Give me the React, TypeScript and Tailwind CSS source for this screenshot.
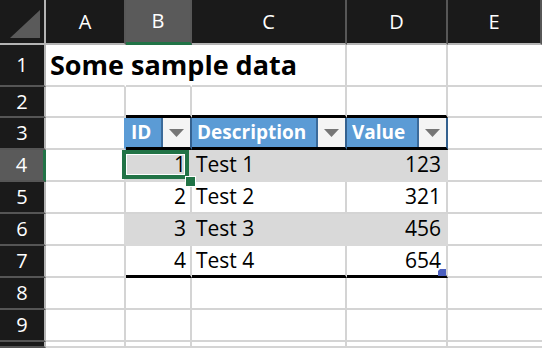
import type { ReactNode } from 'react'

const ROWS = [
  { n: 4, id: 1, desc: 'Test 1', value: 123 },
  { n: 5, id: 2, desc: 'Test 2', value: 321 },
  { n: 6, id: 3, desc: 'Test 3', value: 456 },
  { n: 7, id: 4, desc: 'Test 4', value: 654 },
]

function RowHeader({ n, active }: { n: number | null; active?: boolean }) {
  return (
    <div
      className={`flex w-[46px] shrink-0 items-center justify-center border-b-2 border-b-[#555555] text-[20px] text-white ${
        active ? 'border-r-[3px] border-r-[#217346] bg-[#5a5a5a]' : 'border-r-2 border-r-[#b4b4b4] bg-[#1a1a1a]'
      }`}
    >
      {n}
    </div>
  )
}

function ColHeader({ label, width, active }: { label: string; width: string; active?: boolean }) {
  return (
    <div
      className={`flex shrink-0 items-center justify-center border-r-2 border-r-[#575757] text-[20px] text-white ${width} ${
        active ? 'border-b-[3px] border-b-[#217346] bg-[#5a5a5a]' : 'border-b-2 border-b-[#b4b4b4] bg-[#1a1a1a]'
      }`}
    >
      {label}
    </div>
  )
}

function FilterButton() {
  return (
    <div className="ml-auto flex h-full w-[29px] shrink-0 items-center justify-center border-l-2 border-l-[#3b6a99] bg-[#f4f4f4]">
      <svg width="15" height="8" viewBox="0 0 15 8">
        <polygon points="0,0 15,0 7.5,8" fill="#767676" />
      </svg>
    </div>
  )
}

function HeadCell({ label, width }: { label: string; width: string }) {
  return (
    <div
      className={`flex shrink-0 items-center border-r-2 border-b-[3px] border-r-[#34618f] border-b-black bg-[#5b9bd5] ${width}`}
    >
      <span className="pl-[5px] text-[19px] font-bold text-white">{label}</span>
      <FilterButton />
    </div>
  )
}

function Row({ h, children }: { h: string; children: ReactNode }) {
  return <div className={`flex shrink-0 ${h}`}>{children}</div>
}

export default function App() {
  return (
    <div className="flex h-[348px] w-[542px] flex-col overflow-hidden bg-white font-['Open_Sans',sans-serif] text-black">
      {/* column letters */}
      <Row h="h-[45px]">
        <div className="flex w-[46px] shrink-0 items-end justify-end border-r-2 border-b-2 border-[#b4b4b4] bg-[#1a1a1a] pr-[4px] pb-[5px]">
          <svg width="30" height="28" viewBox="0 0 30 28">
            <polygon points="30,0 30,28 0,28" fill="#5a5a5a" />
          </svg>
        </div>
        <ColHeader label="A" width="w-[80px]" />
        <ColHeader label="B" width="w-[66px]" active />
        <ColHeader label="C" width="w-[155px]" />
        <ColHeader label="D" width="w-[101px]" />
        <ColHeader label="E" width="flex-1" />
      </Row>

      {/* row 1: title spills over B and C */}
      <Row h="h-[42px]">
        <RowHeader n={1} />
        <div className="relative z-10 flex w-[80px] shrink-0 items-center border-r-2 border-b-2 border-r-white border-b-[#d4d4d4] pl-[4px] text-[27px] font-bold whitespace-nowrap">
          Some sample data
        </div>
        <div className="w-[66px] shrink-0 border-r-2 border-b-2 border-r-white border-b-[#d4d4d4]" />
        <div className="w-[155px] shrink-0 border-r-2 border-b-2 border-[#d4d4d4]" />
        <div className="w-[101px] shrink-0 border-r-2 border-b-2 border-[#d4d4d4]" />
        <div className="flex-1 border-b-2 border-[#d4d4d4]" />
      </Row>

      <Row h="h-[31px]">
        <RowHeader n={2} />
        <div className="w-[80px] shrink-0 border-r-2 border-b-2 border-[#d4d4d4]" />
        <div className="w-[66px] shrink-0 border-r-2 border-b-[3px] border-r-[#d4d4d4] border-b-black" />
        <div className="w-[155px] shrink-0 border-r-2 border-b-[3px] border-r-[#d4d4d4] border-b-black" />
        <div className="w-[101px] shrink-0 border-r-2 border-b-[3px] border-r-[#d4d4d4] border-b-black" />
        <div className="flex-1 border-b-2 border-[#d4d4d4]" />
      </Row>

      <Row h="h-[32px]">
        <RowHeader n={3} />
        <div className="w-[80px] shrink-0 border-r-2 border-b-2 border-r-[#5b9bd5] border-b-[#d4d4d4]" />
        <HeadCell label="ID" width="w-[66px]" />
        <HeadCell label="Description" width="w-[155px]" />
        <HeadCell label="Value" width="w-[101px]" />
        <div className="flex-1 border-b-2 border-[#d4d4d4]" />
      </Row>

      {ROWS.map((r) => {
        const band = r.n % 2 === 0
        const last = r.n === 7
        const fill = band ? 'bg-[#d9d9d9] border-r-[#d9d9d9]' : 'border-r-[#d4d4d4]'
        const bottom = last ? 'border-b-[3px] border-b-black' : band ? 'border-b-2 border-b-[#d9d9d9]' : 'border-b-2 border-b-[#d4d4d4]'
        return (
          <Row key={r.n} h="h-[32px]">
            <RowHeader n={r.n} active={r.n === 4} />
            <div
              className={`w-[80px] shrink-0 border-r-2 border-b-2 border-b-[#d4d4d4] ${
                band ? 'border-r-[#d9d9d9]' : 'border-r-[#d4d4d4]'
              }`}
            />
            <div className={`relative flex w-[66px] shrink-0 items-center justify-end border-r-2 pr-[4px] text-[21px] ${fill} ${bottom}`}>
              {r.id}
              {r.n === 4 && (
                // selected cell with its fill handle
                <div className="absolute top-0 -left-[4px] right-[1px] bottom-[1px] z-10 shadow-[inset_0_0_0_4px_#217346,inset_0_0_0_5px_#ffffff]">
                  <div className="absolute top-[26px] left-[63px] h-[11px] w-[11px] border border-white bg-[#217346]" />
                </div>
              )}
            </div>
            <div className={`flex w-[155px] shrink-0 items-center border-r-2 pl-[4px] text-[21px] ${fill} ${bottom}`}>
              {r.desc}
            </div>
            <div className={`relative flex w-[101px] shrink-0 items-center justify-end border-r-2 pr-[5px] text-[21px] ${fill} ${bottom}`}>
              {r.value}
              {last && (
                <svg className="absolute top-[23px] left-[91px]" width="8" height="7" viewBox="0 0 8 7">
                  <polygon points="2,0 8,0 8,7 0,7 0,2" fill="#4a5fbf" />
                </svg>
              )}
            </div>
            <div className="flex-1 border-b-2 border-[#d4d4d4]" />
          </Row>
        )
      })}

      {[8, 9, null].map((n, i) => (
        <Row key={i} h={n === null ? 'h-[6px]' : 'h-[32px]'}>
          <RowHeader n={n} />
          <div className="w-[80px] shrink-0 border-r-2 border-b-2 border-[#d4d4d4]" />
          <div className="w-[66px] shrink-0 border-r-2 border-b-2 border-[#d4d4d4]" />
          <div className="w-[155px] shrink-0 border-r-2 border-b-2 border-[#d4d4d4]" />
          <div className="w-[101px] shrink-0 border-r-2 border-b-2 border-[#d4d4d4]" />
          <div className="flex-1 border-b-2 border-[#d4d4d4]" />
        </Row>
      ))}
    </div>
  )
}
